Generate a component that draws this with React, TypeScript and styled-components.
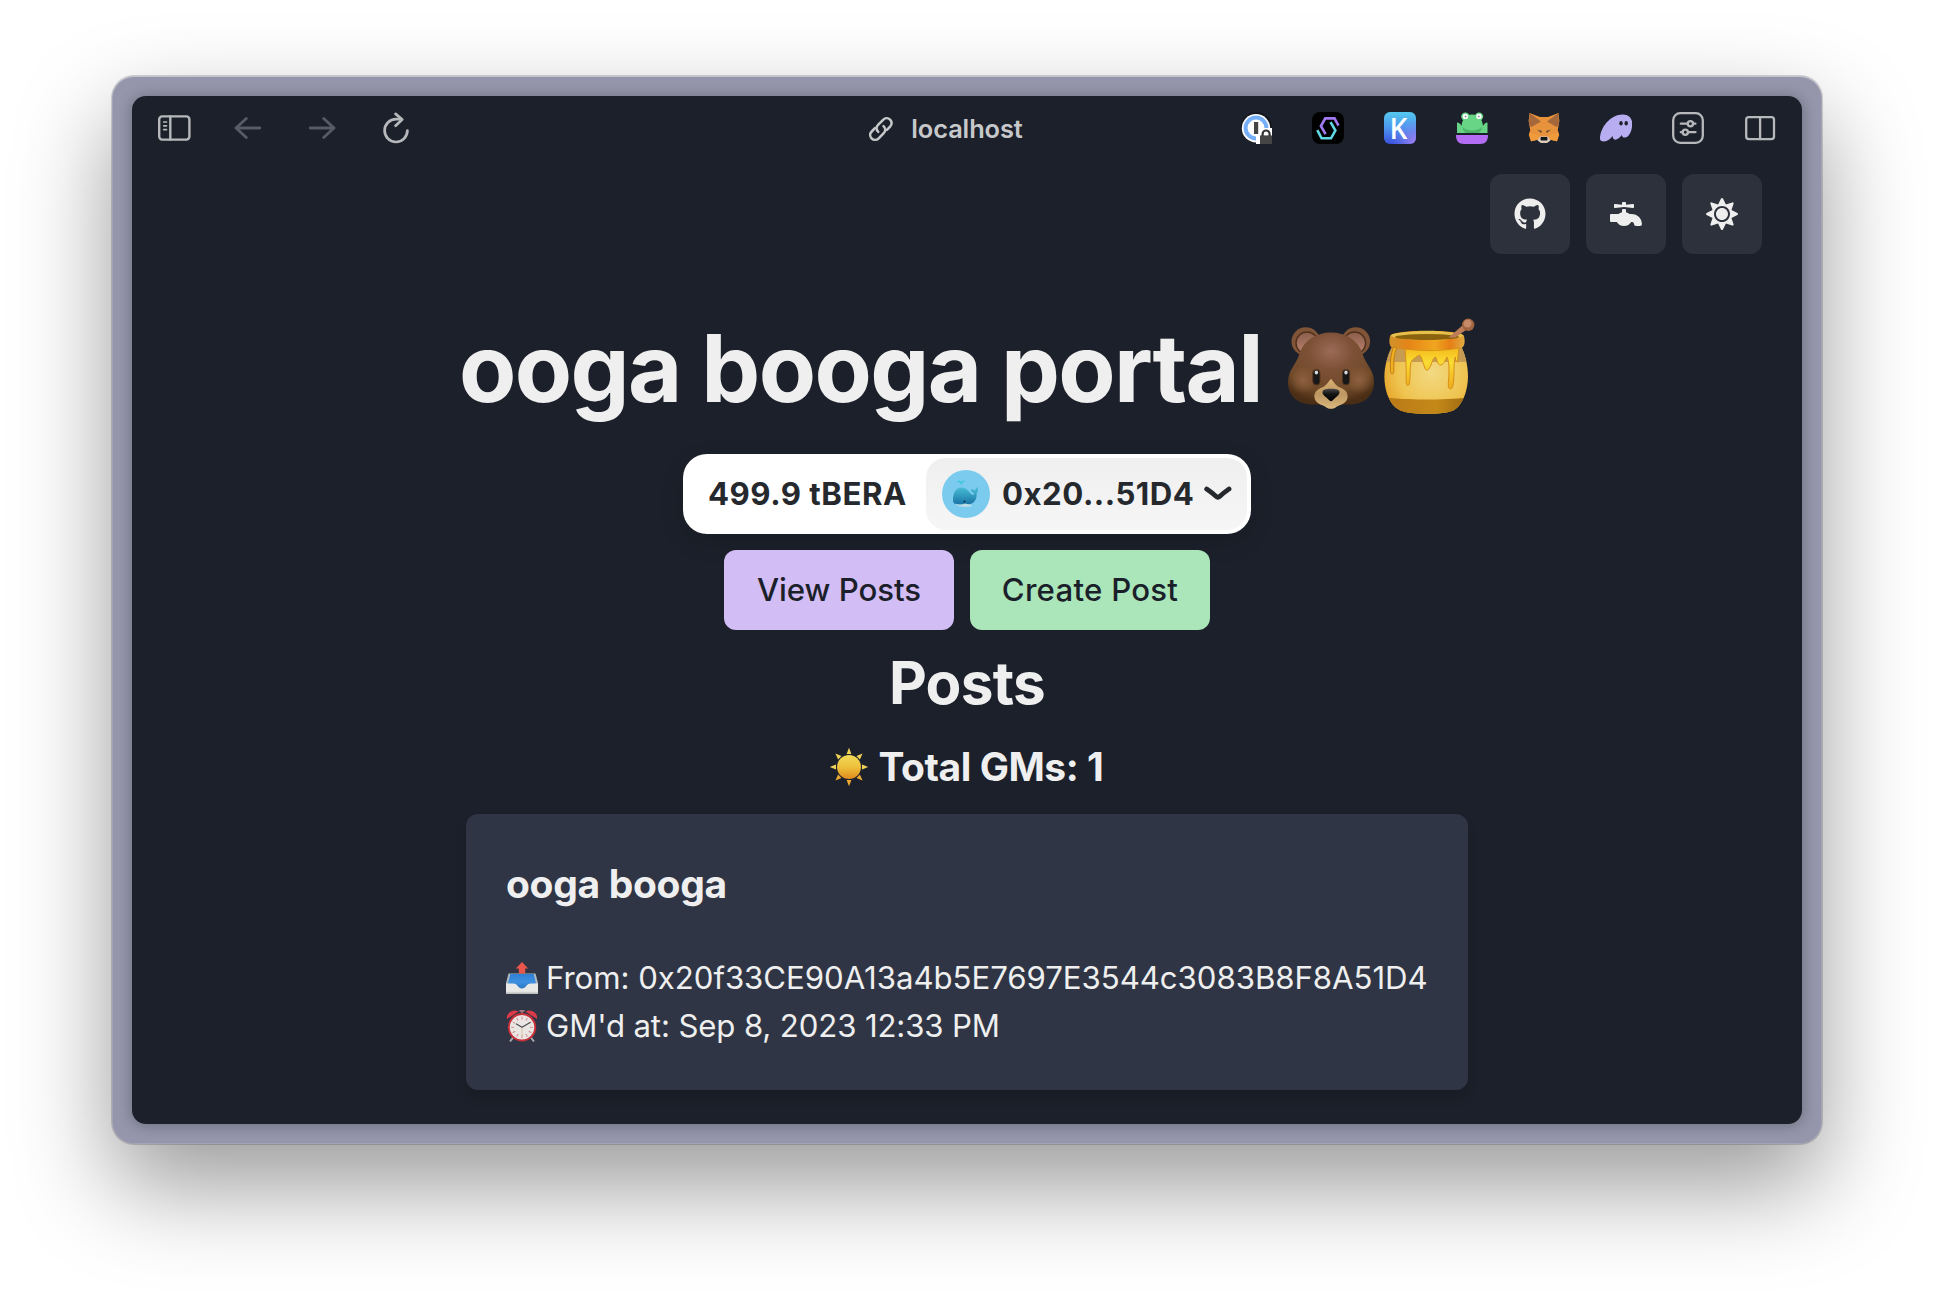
import React from "react";
import styled, { createGlobalStyle } from "styled-components";
import { FaFaucet, FaGithub, FaSun } from "react-icons/fa";

const GlobalStyle = createGlobalStyle`
  * { box-sizing: border-box; }
  body {
    margin: 0;
    background: #fff;
    font-family: Inter, "Noto Sans", sans-serif;
  }
  svg { display: block; flex: none; }
`;

const Desktop = styled.div`
  height: 1292px;
  padding: 76px 112px 148px;
  overflow: hidden;
`;

const BrowserFrame = styled.div`
  height: 1068px;
  padding: 20px;
  border-radius: 22px;
  background: #9595ab;
  box-shadow:
    inset 0 1px 0 rgba(255, 255, 255, 0.35),
    inset 0 0 0 1px rgba(255, 255, 255, 0.14),
    0 0 0 1px rgba(0, 0, 0, 0.16),
    0 42px 96px rgba(0, 0, 0, 0.4);
`;

const Page = styled.div`
  height: 1028px;
  border-radius: 14px;
  background: #1c202a;
  box-shadow: 0 1px 14px rgba(0, 0, 0, 0.28);
  color: #eeefee;
`;

const Toolbar = styled.header`
  display: grid;
  grid-template-columns: 1fr auto 1fr;
  align-items: center;
  height: 64px;
  padding: 0 26px 0 25px;
  color: #b6b8bb;
`;

const ToolGroup = styled.div<{ $gap: number; $end?: boolean }>`
  display: flex;
  align-items: center;
  justify-content: ${(p) => (p.$end ? "flex-end" : "flex-start")};
  gap: ${(p) => p.$gap}px;
`;

const Address = styled.div`
  display: flex;
  align-items: center;
  gap: 16px;
  padding: 1px 43px 0 0;
  font-size: 25.4px;
  font-weight: 600;
  line-height: 32px;
  letter-spacing: -0.1px;
  color: #c6c8ca;
`;

const Actions = styled.nav`
  display: flex;
  justify-content: flex-end;
  gap: 16px;
  padding: 14px 40px 0;
`;

const IconButton = styled.button`
  display: grid;
  place-items: center;
  width: 80px;
  height: 80px;
  padding: 0;
  border: 0;
  border-radius: 12px;
  background: #2d313b;
  color: #eeeeee;
  font-size: 32px;
`;

const Content = styled.main`
  display: flex;
  flex-direction: column;
  align-items: center;
  padding-top: 66px;
`;

const Title = styled.h1`
  display: flex;
  align-items: flex-start;
  width: 1016px;
  margin: 0;
  font-size: 93.6px;
  font-weight: 700;
  line-height: 96px;
  letter-spacing: -1.63px;
  white-space: nowrap;
`;

const TitleEmoji = styled.span`
  display: flex;
  margin-left: auto;
  margin-top: -2px;
`;

const WalletPill = styled.div`
  display: flex;
  align-items: center;
  width: 568px;
  height: 80px;
  margin-top: 38px;
  padding: 4px;
  border-radius: 24px;
  background: #fff;
  box-shadow: 0 8px 24px rgba(0, 0, 0, 0.12);
  color: #25292e;
  font-size: 31.2px;
  font-weight: 650;
  letter-spacing: 0.5px;
`;

const Balance = styled.span`
  flex: 1;
  padding-left: 21px;
  white-space: nowrap;
`;

const Account = styled.button`
  display: flex;
  align-items: center;
  width: 321px;
  height: 72px;
  padding: 0 15px 0 16px;
  border: 0;
  border-radius: 20px;
  background: linear-gradient(#efefef, #f6f6f6);
  color: inherit;
  font: inherit;
  letter-spacing: inherit;
`;

const Avatar = styled.span`
  display: grid;
  place-items: center;
  width: 48px;
  height: 48px;
  margin-right: 12px;
  border-radius: 50%;
  background: #7bcbee;
`;

const AccountName = styled.span`
  flex: 1;
  text-align: left;
`;

const Tabs = styled.div`
  display: flex;
  gap: 16px;
  margin-top: 16px;
`;

const TabButton = styled.button<{ $tone: string; $width: number; $track: number }>`
  width: ${(p) => p.$width}px;
  height: 80px;
  padding: 0;
  border: 0;
  border-radius: 12px;
  background: ${(p) => p.$tone};
  color: #1b1f2a;
  font-family: inherit;
  font-size: 31.2px;
  font-weight: 550;
  letter-spacing: ${(p) => p.$track}px;
`;

const SectionTitle = styled.h2`
  margin: 17px 0 0;
  font-size: 58.5px;
  font-weight: 700;
  line-height: 72px;
  letter-spacing: -0.75px;
`;

const Total = styled.h3`
  display: flex;
  align-items: center;
  gap: 10px;
  margin: 24px 0 23px;
  padding-right: 2px;
  font-size: 39px;
  font-weight: 700;
  line-height: 48px;
  letter-spacing: -0.45px;
`;

const PostCard = styled.article`
  width: 1002px;
  height: 276px;
  padding: 40px;
  border-radius: 12px;
  background: #2f3545;
  box-shadow: 0 8px 12px rgba(0, 0, 0, 0.12);
`;

const PostTitle = styled.h4`
  margin: 0 0 40px;
  font-size: 39px;
  font-weight: 700;
  line-height: 60px;
  letter-spacing: -0.32px;
`;

const PostLine = styled.p<{ $track: number }>`
  display: flex;
  align-items: center;
  gap: 8px;
  margin: 0;
  font-size: 31.2px;
  line-height: 48px;
  letter-spacing: ${(p) => p.$track}px;
  white-space: nowrap;
`;

const Stroke = { fill: "none", stroke: "currentColor", strokeLinecap: "round", strokeLinejoin: "round" } as const;

const SidebarIcon = () => (
  <svg width="31" height="28" viewBox="0 0 31 28" overflow="visible" {...Stroke} strokeWidth="2.4">
    <rect x="2.2" y="2.4" width="30.2" height="23.2" rx="3" />
    <path d="M13.3 2.4v23.2" />
    <path d="M6.7 8h2.8M6.7 11.8h2.8M6.7 15.6h2.8" strokeWidth="1.7" />
  </svg>
);

const ArrowIcon = ({ flip }: { flip?: boolean }) => (
  <svg width="28" height="28" viewBox="0 0 28 28" {...Stroke} stroke="#585a66" strokeWidth="2.8">
    <path d={flip ? "M2.2 14H26M15.7 4.4 26 14 15.7 23.6" : "M25.8 14H2M12.3 4.4 2 14l10.3 9.6"} />
  </svg>
);

const ReloadIcon = () => (
  <svg width="28" height="32" viewBox="0 0 28 32" {...Stroke} strokeWidth="2.7">
    <path d="M25.4 18.6A11.400 11.400 0 1 1 14 7.200h5.400" />
    <path d="M13.600 1.900 20.200 7.500l-6.600 6.200" />
  </svg>
);

const LinkIcon = () => (
  <svg width="28" height="28" viewBox="0 0 28 28" {...Stroke} strokeWidth="2.5">
    <path d="M11.3 16.9c-2.4-2.2-2.3-5 0-7.2l4.8-4.9c2-2 5-2.1 7-.2 2 2 2 5 0 7l-3.2 3.3" />
    <path d="M16.5 11.2c2.4 2.2 2.3 5 0 7.2l-4.8 4.9c-2 2-5 2.1-7 .2-2-2-2-5 0-7l3.2-3.3" />
  </svg>
);

const PasswordExtension = () => (
  <svg width="32" height="32" viewBox="0 0 32 32">
    <circle cx="16.4" cy="15.6" r="15.4" fill="#11141b" />
    <circle cx="16" cy="16.2" r="14.2" fill="#fff" />
    <circle cx="16" cy="16" r="10.4" fill="none" stroke="#76aef8" strokeWidth="4" />
    <rect x="14" y="10" width="4.2" height="12" fill="#454545" />
    <path d="M16 32v-7.500l4-3.500v-5h12v16z" fill="#fff" />
    <path d="M20 32v-8.6h12V32z" fill="#454545" />
    <path d="M22.6 24v-2a3.5 3.5 0 0 1 7 0v2" fill="none" stroke="#333" strokeWidth="2.2" />
  </svg>
);

const HexExtension = () => (
  <svg width="32" height="32" viewBox="0 0 32 32" fill="none" strokeWidth="2.6">
    <rect width="32" height="32" rx="8" fill="#000" />
    <path d="M13.6 22.2 8.9 14l4.4-7.600h9.200l4 7.200" stroke="#a27bf4" />
    <path d="M18.6 10.200 23.400 18.600 19 26.300H9.600L5.300 18.200" stroke="#5fd9e6" />
  </svg>
);

const KText = styled.text`
  font: 600 28px "Open Sans", sans-serif;
`;

const KExtension = () => (
  <svg width="32" height="32" viewBox="0 0 32 32" overflow="visible">
    <defs>
      <linearGradient id="kBase" x1="0" y1="0" x2="0" y2="1">
        <stop offset="0" stopColor="#56c8ee" />
        <stop offset=".5" stopColor="#4b96ee" />
        <stop offset="1" stopColor="#3b50de" />
      </linearGradient>
      <radialGradient id="kGlow" cx="1" cy=".95" r=".75">
        <stop offset="0" stopColor="#a680f2" />
        <stop offset="1" stopColor="#7d8df0" stopOpacity="0" />
      </radialGradient>
    </defs>
    <rect width="32" height="32" rx="6" fill="url(#kBase)" />
    <rect width="32" height="32" rx="6" fill="url(#kGlow)" />
    <KText x="5.600" y="26.600" fill="#fff">K</KText>
  </svg>
);

const FrogExtension = () => (
  <svg width="32" height="32" viewBox="0 0 32 32">
    <path d="M1 21V10.500c2 0 3.500 1.500 4.500 3.500C6 8 9 2.500 16.200 2.500S26.500 8 27 14c1-2 2.500-3.500 4.500-3.500V21z" fill="#67d585" />
    <circle cx="9.400" cy="4.600" r="4.200" fill="#67d585" />
    <circle cx="23" cy="4.600" r="4.200" fill="#67d585" />
    <path d="M6.500 15c4 4.600 15.500 4.600 19.500 0-.5 3.500-2 6-4.500 6H11c-2.500 0-4-2.500-4.500-6z" fill="#4db66c" />
    <path d="M7 14c3 4.500 15.500 4.500 18.500 0V9H7z" fill="#67d585" />
    <circle cx="9.400" cy="4.400" r="2.700" fill="#fff" />
    <circle cx="23" cy="4.400" r="2.700" fill="#fff" />
    <circle cx="9.600" cy="4.400" r="1" fill="#8c9a9c" />
    <circle cx="22.800" cy="4.400" r="1" fill="#8c9a9c" />
    <path d="M0 23h32c0 6-2.500 9-8 9H8c-5.500 0-8-3-8-9z" fill="#b26df4" />
  </svg>
);

const FoxExtension = () => (
  <svg width="32" height="32" viewBox="0 0 32 32">
    <path d="M1.600 1 12 5h8L30.400 1l1 8-1.600 9 1.400 5-2.200 6.500-7-2-3 3h-6l-3-3-7 2L.8 23l1.400-5L.6 9z" fill="#e8923b" />
    <path d="M1.600 1 13 9.500 3.500 15 .8 13l.4-5zM30.400 1 19 9.500 28.500 15l2.700-2-.4-5z" fill="#a5673c" />
    <path d="m1 21 10 1.500 1 5-9 1.500zM31 21l-10 1.500-1 5 9 1.500z" fill="#f09a3c" />
    <path d="m9 17.500 5 1.500-.8 2zM23 17.500 18 19l.8 2z" fill="#5a4a3c" />
    <path d="M12 24.500h8l2.500 4L19 31h-6l-3.500-2.500z" fill="#d8cabd" />
    <path d="M12.800 25h6.400l.4 2.600-1 .9h-5.200l-1-.9z" fill="#17181c" />
  </svg>
);

const GhostExtension = () => (
  <svg width="32" height="32" viewBox="0 0 32 32">
    <path
      d="M0 26.800C0 16 10 2.500 23 2.500c6 0 9.200 4 9.200 9.200 0 7-3.200 13.900-7.400 13.900-1.700 0-2.800-1-3.100-2.600-1.600 2.600-4.200 4.700-6.500 4.700-1.700 0-2.500-1.400-2.600-3.600-2 3-5.200 5.400-8.600 5.400-2.600 0-4-1-4-2.700z"
      fill="#b9adf2"
    />
    <ellipse cx="21" cy="11.300" rx="1.700" ry="2.300" fill="#1c202a" />
    <ellipse cx="26.200" cy="11.300" rx="1.700" ry="2.300" fill="#1c202a" />
  </svg>
);

const SlidersIcon = () => (
  <svg width="32" height="32" viewBox="0 0 32 32" {...Stroke} strokeWidth="2.300">
    <rect x="1.200" y="1.200" width="29.600" height="29.600" rx="7" />
    <path d="M8.800 11.700h6.500M21.500 11.700h1.900M8.800 20.200h1M16.500 20.200h7" />
    <circle cx="18.400" cy="11.700" r="2.600" />
    <circle cx="13.300" cy="20.200" r="2.600" />
  </svg>
);

const SplitIcon = () => (
  <svg width="32" height="32" viewBox="0 0 32 32" {...Stroke} strokeWidth="2.300">
    <rect x="2.200" y="5.200" width="27.800" height="22" rx="2.600" />
    <path d="M16.100 5.200v22" />
  </svg>
);

const BearEmoji = () => (
  <svg width="96" height="98" viewBox="0 0 96 98">
    <defs>
      <radialGradient id="bearFur" cx=".5" cy=".26" r=".74">
        <stop offset="0" stopColor="#9d6a57" />
        <stop offset=".35" stopColor="#7c5136" />
        <stop offset=".75" stopColor="#6f4928" />
        <stop offset="1" stopColor="#4a2d15" />
      </radialGradient>
      <radialGradient id="bearCheek">
        <stop offset="0" stopColor="#8d6040" />
        <stop offset="1" stopColor="#8d6040" stopOpacity="0" />
      </radialGradient>
      <linearGradient id="bearEar" x1="0" y1="0" x2="0" y2="1">
        <stop offset="0" stopColor="#8a5f4b" />
        <stop offset="1" stopColor="#ba8270" />
      </linearGradient>
      <linearGradient id="bearMuzzle" x1="0" y1="0" x2="0" y2="1">
        <stop offset="0" stopColor="#d9b273" />
        <stop offset=".5" stopColor="#bd9661" />
        <stop offset="1" stopColor="#dab87d" />
      </linearGradient>
      <linearGradient id="bearNose" x1="0" y1="0" x2="0" y2="1">
        <stop offset="0" stopColor="#4a4a4a" />
        <stop offset=".4" stopColor="#161616" />
        <stop offset="1" stopColor="#000" />
      </linearGradient>
    </defs>
    <circle cx="22.800" cy="23.500" r="14.300" fill="#805437" />
    <circle cx="72.800" cy="23.500" r="14.300" fill="#805437" />
    <circle cx="24" cy="25" r="11" fill="url(#bearEar)" stroke="#51301b" strokeWidth="1.400" />
    <circle cx="71.600" cy="25" r="11" fill="url(#bearEar)" stroke="#51301b" strokeWidth="1.400" />
    <path
      d="M48 14.400c14.500 0 27 7.500 31.500 21 2 6.500 4 9 7 14 3 4.500 4.500 9 4.500 15 0 13-9.500 22-25 22H30c-15.500 0-25-9-25-22 0-6 1.500-10.500 4.500-15 3-5 5-7.500 7-14 4.500-13.500 17-21 31.500-21z"
      fill="url(#bearFur)"
    />
    <circle cx="20" cy="62" r="14" fill="url(#bearCheek)" />
    <circle cx="76" cy="62" r="14" fill="url(#bearCheek)" />
    <path d="M48 61c2.500 2 4 6.500 9 8.500 5 2 8 5 7.600 9.500-.4 4.500-4 7-8 8.200-3 1-4.600 3.600-8.600 3.600s-5.600-2.600-8.600-3.600c-4-1.200-7.600-3.700-8-8.200-.4-4.500 2.600-7.500 7.600-9.500 5-2 6.500-6.500 9-8.500z" fill="url(#bearMuzzle)" />
    <path d="M40 72.500c1.500-2.400 14.500-2.400 16 0 1.600 2.500-.8 5-2.800 6.500l-3.700 3.600c-.9.9-2.100.9-3 0L42.800 79c-2-1.500-4.400-4-2.800-6.500z" fill="url(#bearNose)" />
    <g fill="#181818" stroke="#55351d" strokeWidth="1">
      <rect x="29.800" y="51.500" width="7.200" height="15.500" rx="3.600" />
      <rect x="59.400" y="51.500" width="7.200" height="15.500" rx="3.600" />
    </g>
    <ellipse cx="33.400" cy="54.500" rx="1.700" ry="2" fill="#d8d8d8" />
    <ellipse cx="63" cy="54.500" rx="1.700" ry="2" fill="#d8d8d8" />
  </svg>
);

const HoneyEmoji = () => (
  <svg width="96" height="98" viewBox="0 0 96 98">
    <defs>
      <radialGradient id="honeyBody" cx=".55" cy=".55" r=".6">
        <stop offset="0" stopColor="#f2d982" />
        <stop offset=".6" stopColor="#efc450" />
        <stop offset="1" stopColor="#e39a1c" />
      </radialGradient>
      <linearGradient id="honeyBase" x1="0" y1="0" x2="1" y2="0">
        <stop offset="0" stopColor="#b97818" />
        <stop offset=".6" stopColor="#c48818" />
        <stop offset="1" stopColor="#946311" />
      </linearGradient>
      <linearGradient id="honeyRim" x1="0" y1="0" x2="1" y2="0">
        <stop offset="0" stopColor="#d0912c" />
        <stop offset=".25" stopColor="#e28618" />
        <stop offset=".6" stopColor="#f7cf25" />
        <stop offset=".8" stopColor="#e57d14" />
        <stop offset="1" stopColor="#dfac43" />
      </linearGradient>
      <linearGradient id="honeyDrip" x1="0" y1="0" x2="0" y2="1">
        <stop offset="0" stopColor="#f4b91c" />
        <stop offset=".35" stopColor="#f9dc33" />
        <stop offset="1" stopColor="#efa91d" />
      </linearGradient>
      <clipPath id="honeyJar">
        <path d="M13 29h69.500c2.500 5 6.700 17 6.500 30-.2 13-4.500 24-10 30-5 5.500-15 6.800-31 6.800S22 94.500 16 89C9.500 82.500 5.500 72 5.400 59 5.300 47 10 34 13 29z" />
      </clipPath>
    </defs>
    <g clipPath="url(#honeyJar)">
      <rect width="96" height="98" fill="url(#honeyBody)" />
      <rect width="96" height="44" fill="#c79b52" />
      <path d="M0 78.500c20 4 70 4 96 0V98H0z" fill="url(#honeyBase)" />
    </g>
    <path d="M11 18c3-7 71-7 74 0 1 5 1 8-1 11-9 5-63 5-72 0-2-3-2-6-1-11z" fill="url(#honeyRim)" />
    <ellipse cx="48" cy="17.500" rx="36" ry="4.400" fill="#e6c04c" />
    <ellipse cx="48" cy="19" rx="32" ry="3" fill="#8b620d" />
    <path d="M25 23.500c12-2 35-2 48 0l1 6c-12 3-37 3-50 0z" fill="#e9841a" opacity=".55" />
    <path
      d="M26 31c16 2 38 2 54-1-1 6-1 10-1.500 14-2-1-2.500-3-2-5-2 4-1 13-2 25-.5 5-1.500 7-3 7-2 0-2.500-3-2-8 1-11 .5-20-1.500-24-2 4-4 8-6.500 8-3 0-3.500-6-5-8-3 1-3.500 7-6 11-2 3-4 3-5-1-2-6-3-10-5-12-3 2-8 4-9 9-.6 9-.2 15-1.300 20-.7 2-2 2-2.700 0-1-5 .5-13-1.400-35z"
      fill="url(#honeyDrip)"
      stroke="#d78f17"
      strokeWidth="1"
    />
    <path d="M18 30c-3 5-3.500 12-3.200 22 .1 5-2.800 5.500-3.300 1-.5-8 0-16 3-24z" fill="#eeb122" stroke="#c57d12" strokeWidth="1" />
    <path d="M69.500 19.600 84 7l4 4.200-11.500 8.200z" fill="#bd7d58" />
    <circle cx="89.200" cy="6.800" r="6.200" fill="#a0653f" />
    <circle cx="88.600" cy="5.600" r="3.900" fill="#c78a68" />
  </svg>
);

const SunEmoji = () => (
  <svg width="40" height="40" viewBox="-20 -20 40 40">
    <defs>
      <linearGradient id="sunDisc" x1="0" y1="0" x2="0" y2="1">
        <stop offset="0" stopColor="#f0dc58" />
        <stop offset=".5" stopColor="#eec03b" />
        <stop offset="1" stopColor="#df8a1c" />
      </linearGradient>
    </defs>
    {[0, 45, 90, 135, 180, 225, 270, 315].map((a) => (
      <path key={a} d="M0-19.200 2.400-13H-2.400z" fill={a > 90 && a < 270 ? "#eeaa32" : "#f1d35a"} transform={`rotate(${a})`} />
    ))}
    <circle r="12" fill="url(#sunDisc)" />
  </svg>
);

const OutboxEmoji = () => (
  <svg width="32" height="32" viewBox="0 0 32 32">
    <defs>
      <linearGradient id="trayBlue" x1="0" y1="0" x2="0" y2="1">
        <stop offset="0" stopColor="#2f7fd2" />
        <stop offset=".5" stopColor="#3f90e2" />
        <stop offset="1" stopColor="#2672bd" />
      </linearGradient>
    </defs>
    <path d="M2.500 11.500h27L32 21v10.500H0V21z" fill="#aeb9c0" />
    <path d="M4.300 12h23.400l2.300 9.500-8 1.500-5.500 5h-3L9 23l-7-1.500z" fill="url(#trayBlue)" />
    <path d="M0 21.500h7.500c4 0 4.500 5 8.500 5s4.500-5 8.500-5H32v10H0z" fill="#e9e9e7" />
    <path d="M0 29.800h32v1.700H0z" fill="#cfcfcd" />
    <path d="M16 0 22.200 6.600h-3V11.500h-6.400V6.600h-3z" fill="#e9564b" />
  </svg>
);

const ClockEmoji = () => (
  <svg width="32" height="32" viewBox="0 0 32 32">
    <path d="m7.500 27-3 3.800M24.500 27l3 3.800" stroke="#a7a7aa" strokeWidth="2" strokeLinecap="round" />
    <path d="M16 0v4M13.500.9h5" stroke="#a87a80" strokeWidth="1.600" />
    <path d="M1 9C-.5 3.500 7-1.500 12.500 1.500zM31 9c1.500-5.500-6-10.500-11.500-7.500z" fill="#d93c48" />
    <circle cx="16" cy="17.300" r="14.200" fill="#c8303a" />
    <circle cx="16" cy="17.300" r="12.200" fill="#e9e6e4" />
    {Array.from({ length: 12 }, (_, i) => (
      <path key={i} d="M16 6.500v3" stroke="#d58b8e" strokeWidth="1" transform={`rotate(${i * 30} 16 17.300)`} />
    ))}
    <path d="M16 17.300V27" stroke="#d8c6a0" strokeWidth="1" />
    <path d="m10 13.800 6 3.500 8.500-5" fill="none" stroke="#4e4e50" strokeWidth="1.200" strokeLinejoin="round" />
  </svg>
);

const WhaleEmoji = () => (
  <svg width="28" height="28" viewBox="0 0 28 28">
    <defs>
      <linearGradient id="whaleSkin" x1="0" y1="0" x2="0" y2="1">
        <stop offset="0" stopColor="#4ac0d8" />
        <stop offset="1" stopColor="#1873a5" />
      </linearGradient>
    </defs>
    <path d="M9 4.500C8 2 6 2.500 5.500.8 7.500.5 8.500 1 9.200 2 10 1 11 .5 13 .8 12.500 2.500 10 2 9.600 4.500z" fill="#3ac8dc" />
    <path
      d="M1 20.500C1 12 4.500 7.600 9.500 7.600c5.500 0 7.500 4.500 9.500 6.300 1.500 1.300 3 .8 3.500-.8-2.500-.5-3.500-2-3.500-3.700 1.700-.3 3.200.4 4 1.600.3-1.800 1-3.300 2.400-4.100.9 2.700.6 5-.9 6.700.8 5.300-2.500 10.500-8 11H7c-4 0-6-1.200-6-4.100z"
      fill="url(#whaleSkin)"
    />
    <path d="M3 23.500c3 1.500 7 1.500 10 0l7 1.500-1 1.500c-6 1-12 .8-16-3z" fill="#bcdce5" />
    <circle cx="12.500" cy="21.500" r="1" fill="#0d2d45" />
  </svg>
);

const Chevron = () => (
  <svg width="28" height="16" viewBox="0 0 28 16" {...Stroke} strokeWidth="4.800">
    <path d="M2.700 3c3.300 2.300 6 4.300 9.200 7.200 1.200 1.100 2.800 1.100 4 0C19 7.300 21.800 5.300 25 3" />
  </svg>
);

export default function App() {
  return (
    <>
      <GlobalStyle />
      <Desktop>
        <BrowserFrame>
          <Page>
            <Toolbar>
              <ToolGroup $gap={46}>
                <SidebarIcon />
                <ArrowIcon />
                <ArrowIcon flip />
                <ReloadIcon />
              </ToolGroup>
              <Address>
                <LinkIcon />
                localhost
              </Address>
              <ToolGroup $gap={40} $end>
                <PasswordExtension />
                <HexExtension />
                <KExtension />
                <FrogExtension />
                <FoxExtension />
                <GhostExtension />
                <SlidersIcon />
                <SplitIcon />
              </ToolGroup>
            </Toolbar>
            <Actions>
              <IconButton aria-label="GitHub"><FaGithub /></IconButton>
              <IconButton aria-label="Faucet"><FaFaucet /></IconButton>
              <IconButton aria-label="Light mode"><FaSun /></IconButton>
            </Actions>
            <Content>
              <Title>
                ooga booga portal
                <TitleEmoji>
                  <BearEmoji />
                  <HoneyEmoji />
                </TitleEmoji>
              </Title>
              <WalletPill>
                <Balance>499.9 tBERA</Balance>
                <Account>
                  <Avatar><WhaleEmoji /></Avatar>
                  <AccountName>0x20...51D4</AccountName>
                  <Chevron />
                </Account>
              </WalletPill>
              <Tabs>
                <TabButton $tone="#d2bdf5" $width={230} $track={-0.05}>View Posts</TabButton>
                <TabButton $tone="#abe5ba" $width={240} $track={0.25}>Create Post</TabButton>
              </Tabs>
              <SectionTitle>Posts</SectionTitle>
              <Total>
                <SunEmoji />
                Total GMs: 1
              </Total>
              <PostCard>
                <PostTitle>ooga booga</PostTitle>
                <PostLine $track={-0.05}>
                  <OutboxEmoji />
                  From: 0x20f33CE90A13a4b5E7697E3544c3083B8F8A51D4
                </PostLine>
                <PostLine $track={-0.14}>
                  <ClockEmoji />
                  GM'd at: Sep 8, 2023 12:33 PM
                </PostLine>
              </PostCard>
            </Content>
          </Page>
        </BrowserFrame>
      </Desktop>
    </>
  );
}
